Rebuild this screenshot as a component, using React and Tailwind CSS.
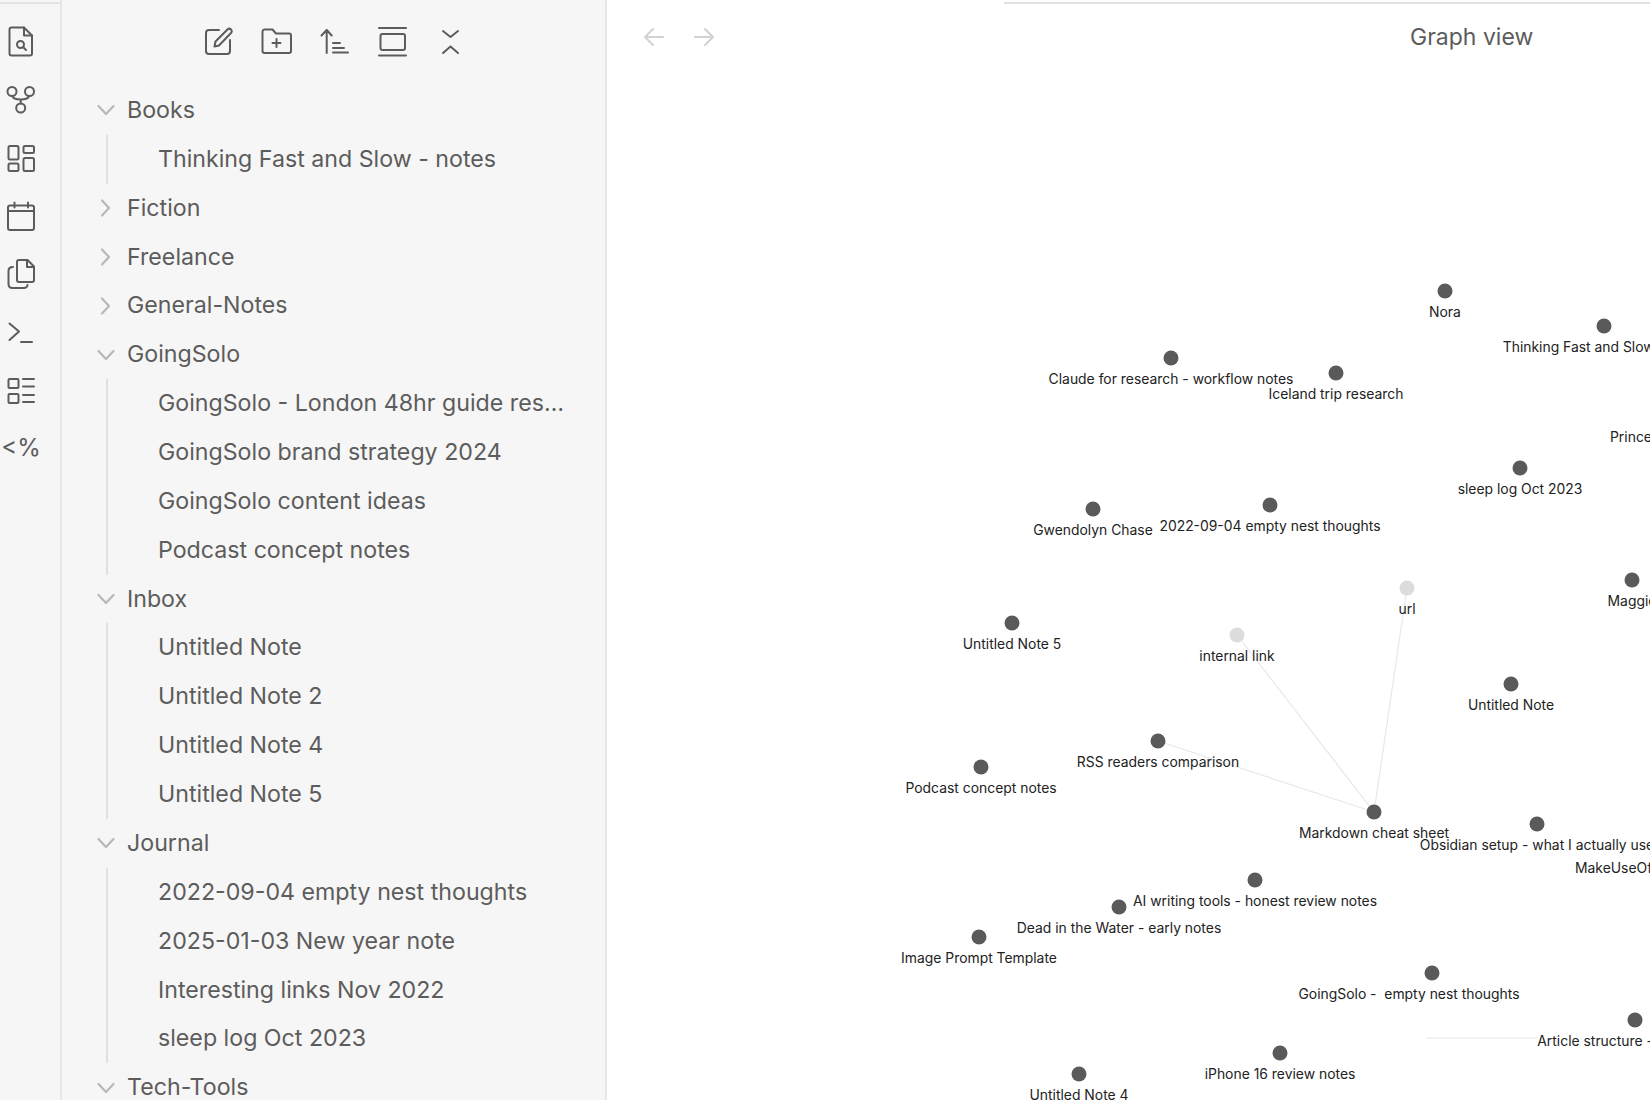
import React from 'react';

const stroke = { fill: 'none', stroke: 'currentColor', strokeWidth: 2, strokeLinecap: 'round', strokeLinejoin: 'round' };

function Icon({ children }) {
  return (
    <svg viewBox="0 0 32 32" className="w-8 h-8 shrink-0 text-[#5c5c5c]" {...stroke}>
      {children}
    </svg>
  );
}

const ribbonIcons = [
  <>
    <path d="M6.5 1.5H19l8 8v18a2 2 0 0 1-2 2H6.5a2 2 0 0 1-2-2v-24a2 2 0 0 1 2-2z" />
    <path d="M19 1.5v8h8" />
    <circle cx="15.5" cy="18.5" r="3.5" />
    <path d="M18.3 21.3L21 24" />
  </>,
  <>
    <circle cx="7" cy="7.5" r="4.500" />
    <circle cx="24.500" cy="7.5" r="4.500" />
    <circle cx="15.700" cy="24" r="4.500" />
    <path d="M7.500 12c.5 2.500 3 3.500 8.200 3.500s7.800-1 8.300-3.500M15.700 15.500v4" />
  </>,
  <>
    <rect x="3.500" y="4" width="10" height="13.500" rx="1.500" />
    <rect x="18.500" y="4" width="10.500" height="7" rx="1.500" />
    <rect x="3.500" y="21.500" width="10" height="7.500" rx="1.500" />
    <rect x="18.500" y="16" width="10.500" height="13" rx="1.500" />
  </>,
  <>
    <rect x="3" y="5.500" width="26" height="24.500" rx="2" />
    <path d="M3 11h26M9.500 2.500v5M23 2.500v5" />
  </>,
  <>
    <path d="M14 2h8.500L29 8.500V22a2 2 0 0 1-2 2H14a2 2 0 0 1-2-2V4a2 2 0 0 1 2-2z" />
    <path d="M22 2v7h7" />
    <path d="M8 9c-3 0-4.500 1.500-4.500 4v13c0 2.500 1.500 4 4 4H19c2 0 3.500-1.500 3.500-3" />
  </>,
  <>
    <path d="M4.500 7.500l9.500 8-9.500 8.500M16 26h11" />
  </>,
  <>
    <rect x="3.500" y="5" width="10" height="9" rx="1" />
    <rect x="3.500" y="20" width="10" height="9" rx="1" />
    <path d="M18 5h11M18 12.500h11M18 21h11M18 28h11" />
  </>,
];

const toolbarIcons = [
  <>
    <path d="M17 4H7a3 3 0 0 0-3 3v18a3 3 0 0 0 3 3h18a3 3 0 0 0 3-3V14" />
    <path d="M12.500 20.500l1-5L25.500 3.500c1-1 2.500-1 3.500 0s1 2.500 0 3.500L17 19.500z" />
  </>,
  <>
    <path d="M4.500 3.500h8l3.500 4h13a2 2 0 0 1 2 2V25a2 2 0 0 1-2 2H4.500a2 2 0 0 1-2-2V5.500a2 2 0 0 1 2-2z" />
    <path d="M16.500 13v8M12.500 17h8" />
  </>,
  <>
    <path d="M8.700 4v23M3.500 9.500L8.700 4l5 5.500M15 17h7M15 22h11M15 26.500h15" />
  </>,
  <>
    <path d="M3 2h27M3 29.500h27" />
    <rect x="4.500" y="8" width="24.500" height="16" rx="2" />
  </>,
  <>
    <path d="M9 5l7.500 6L24 5M9 27l7.500-6.500L24 27" />
  </>,
];

const tree = [
  { name: 'Books', open: true, notes: ['Thinking Fast and Slow - notes'] },
  { name: 'Fiction' },
  { name: 'Freelance' },
  { name: 'General-Notes' },
  {
    name: 'GoingSolo',
    open: true,
    notes: [
      'GoingSolo - London 48hr guide research',
      'GoingSolo brand strategy 2024',
      'GoingSolo content ideas',
      'Podcast concept notes',
    ],
  },
  { name: 'Inbox', open: true, notes: ['Untitled Note', 'Untitled Note 2', 'Untitled Note 4', 'Untitled Note 5'] },
  {
    name: 'Journal',
    open: true,
    notes: ['2022-09-04 empty nest thoughts', '2025-01-03 New year note', 'Interesting links Nov 2022', 'sleep log Oct 2023'],
  },
  { name: 'Tech-Tools', open: true, notes: [] },
];

// x/y are page coordinates, the svg viewBox starts where the graph pane does
const nodes = [
  { x: 1445, y: 291, label: 'Nora' },
  { x: 1604, y: 326, label: 'Thinking Fast and Slow - notes' },
  { x: 1171, y: 358, label: 'Claude for research - workflow notes' },
  { x: 1336, y: 373, label: 'Iceland trip research' },
  { x: 1520, y: 468, label: 'sleep log Oct 2023' },
  { x: 1093, y: 509, label: 'Gwendolyn Chase' },
  { x: 1270, y: 505, label: '2022-09-04 empty nest thoughts' },
  { x: 1407, y: 588, label: 'url', ghost: true },
  { x: 1237, y: 635, label: 'internal link', ghost: true },
  { x: 1632, y: 580, label: 'Maggie' },
  { x: 1012, y: 623, label: 'Untitled Note 5' },
  { x: 1511, y: 684, label: 'Untitled Note' },
  { x: 1158, y: 741, label: 'RSS readers comparison' },
  { x: 981, y: 767, label: 'Podcast concept notes' },
  { x: 1374, y: 812, label: 'Markdown cheat sheet' },
  { x: 1537, y: 824, label: 'Obsidian setup - what I actually use' },
  { x: 1255, y: 880, label: 'AI writing tools - honest review notes' },
  { x: 1119, y: 907, label: 'Dead in the Water - early notes' },
  { x: 979, y: 937, label: 'Image Prompt Template' },
  { x: 1432, y: 973, label: 'GoingSolo -  empty nest thoughts', labelX: 1409 },
  { x: 1635, y: 1020, label: 'Article structure - how I write', labelX: 1633 },
  { x: 1280, y: 1053, label: 'iPhone 16 review notes' },
  { x: 1079, y: 1074, label: 'Untitled Note 4' },
];

const edges = [
  [1374, 812, 1407, 588],
  [1374, 812, 1237, 635],
  [1374, 812, 1158, 741],
  [1426, 1038, 1537, 1038],
];

const looseLabels = [
  { x: 1610, y: 442, label: 'Prince' },
  { x: 1575, y: 873, label: 'MakeUseOf' },
];

function Chevron({ open }) {
  return (
    <svg viewBox="0 0 20 20" className="w-5 h-5 shrink-0 text-[#b8b8b8]" fill="none" stroke="currentColor" strokeWidth="2.200" strokeLinecap="round" strokeLinejoin="round">
      {open ? <path d="M2.500 6l7.500 8 7.500-8" /> : <path d="M6 2.500l7 7.500-7 7.500" />}
    </svg>
  );
}

function Folder({ folder }) {
  return (
    <div>
      <div className="h-[48.87px] flex items-center gap-[11px] pl-[34px]">
        <Chevron open={folder.open} />
        <span>{folder.name}</span>
      </div>
      {folder.open && folder.notes.length > 0 && (
        <div className="ml-[44px] border-l-2 border-[#e0e0e0] pl-[50px]">
          {folder.notes.map((note) => (
            <div key={note} className="h-[48.87px] flex items-center">
              <span className="truncate w-[408px]">{note}</span>
            </div>
          ))}
        </div>
      )}
    </div>
  );
}

export default function App() {
  return (
    <div className="h-screen flex overflow-hidden bg-white font-['Inter',sans-serif]">
      {/* Ribbon */}
      <div className="w-[62px] shrink-0 bg-[#f6f6f6] border-r-2 border-[#e6e6e6] flex flex-col">
        <div className="mt-[2px] h-[2px] bg-[#e4e4e4]" />
        <div className="pt-[22px] pl-[5px] flex flex-col gap-[26px]">
          {ribbonIcons.map((icon, i) => (
            <Icon key={i}>{icon}</Icon>
          ))}
          <div className="h-8 w-8 flex items-center justify-center text-[24px] text-[#5c5c5c] leading-none">&lt;%</div>
        </div>
      </div>

      {/* File tree */}
      <div className="w-[545px] shrink-0 bg-[#f6f6f6] border-r-2 border-[#e6e6e6] flex flex-col">
        <div className="mt-[2px] h-[2px] bg-[#e4e4e4]" />
        <div className="pt-[24px] pl-[140px] flex gap-[26px]">
          {toolbarIcons.map((icon, i) => (
            <Icon key={i}>{icon}</Icon>
          ))}
        </div>
        <div className="pt-[28px] text-[23.2px] text-[#5c5c5c]">
          {tree.map((folder) => (
            <Folder key={folder.name} folder={folder} />
          ))}
        </div>
      </div>

      {/* Graph pane */}
      <div className="flex-1 min-w-0 flex flex-col">
        <div className="mt-[2px] h-[2px] ml-[397px] bg-[#e2e2e2] shrink-0" />
        <div className="h-[66px] shrink-0 flex items-center pl-[36px] text-[#d2d2d2]">
          <svg viewBox="0 0 22 22" className="w-[22px] h-[22px]" {...stroke}>
            <path d="M20 11H2M10 3l-8 8 8 8" />
          </svg>
          <svg viewBox="0 0 22 22" className="w-[22px] h-[22px] ml-[28px]" {...stroke}>
            <path d="M2 11h18M12 3l8 8-8 8" />
          </svg>
          <span className="ml-[695px] text-[23px] text-[#5c5c5c]">Graph view</span>
        </div>
        <svg viewBox="607 70 1043 1030" className="w-[1043px] h-[1030px] shrink-0">
          {edges.map((e, i) => (
            <line key={i} x1={e[0]} y1={e[1]} x2={e[2]} y2={e[3]} stroke="#e8e8e8" strokeWidth="1.200" />
          ))}
          {nodes.map((n) => (
            <g key={n.label}>
              <circle cx={n.x} cy={n.y} r="7.500" fill={n.ghost ? '#dcdcdc' : '#5a5a5a'} />
              <text x={n.labelX ?? n.x} y={n.y + 26} textAnchor="middle" fontSize="13.900" fill="#222222" xmlSpace="preserve">
                {n.label}
              </text>
            </g>
          ))}
          {looseLabels.map((l) => (
            <text key={l.label} x={l.x} y={l.y} fontSize="13.900" fill="#222222">
              {l.label}
            </text>
          ))}
        </svg>
      </div>
    </div>
  );
}
